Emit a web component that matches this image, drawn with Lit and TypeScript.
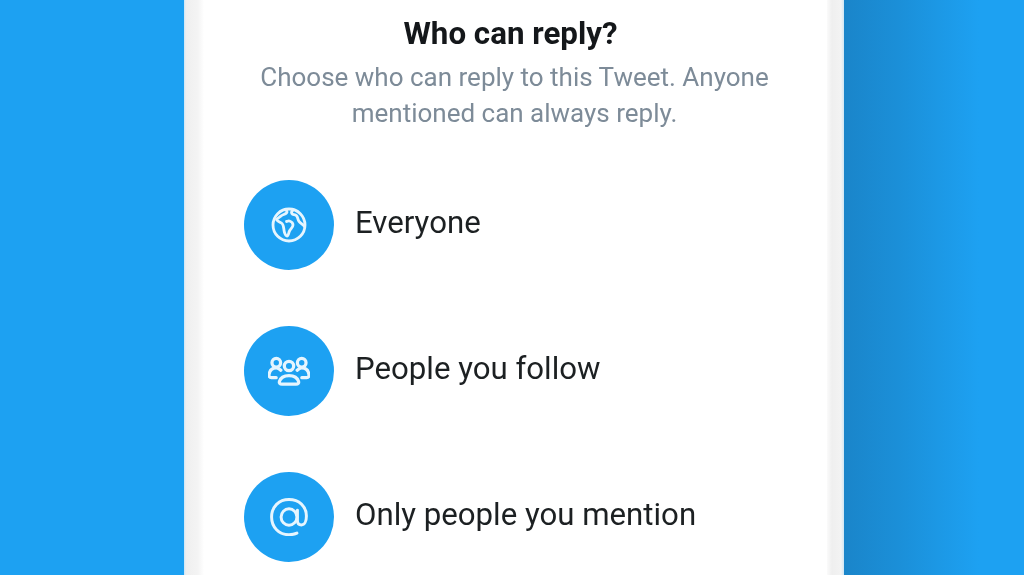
import { LitElement, css, html, svg } from "lit";
import { customElement } from "lit/decorators.js";

const globeIcon = svg`
  <circle cx="18" cy="18" r="16" />
  <path d="M14 2.500c2 1 2.500 2.500 1.500 3.500-1.500 1.500-4 1.500-5.500 3-1.500 1.500-3.500 2-4.500 3.500 1.500 2.500 3.500 2.500 5.500 4 2 1.500 1.500 6 2.500 9 .5 1.500 1 3.500 2.500 3.500 1.500 0 1.500-3 2.500-5 1-2 3.500-3.500 3.500-6 0-2-2-3.500-3.500-4-1.500-.5-2 .5-3 .5" />
  <path d="M22.500 2.800c-1.500 1-2.500 2.500-1.500 4 .8 1.200 3 .5 4.500 2 1.500 1.500 1 3.500 2.500 5.500 1.500 2 4 3 5.500 5" />
`;

const peopleIcon = svg`
  <circle cx="18" cy="13.700" r="4" />
  <path d="M12 29.200c-1.800 0-2.600-.8-2.200-2.300.9-3 4-5 8.200-5s7.300 2 8.200 5c.4 1.500-.4 2.300-2.200 2.300z" />
  <circle cx="7.100" cy="10.900" r="3.700" />
  <path d="M11 17.300c-1.100-1-2.400-1.900-3.900-1.900-3 0-5.500 2-6.200 5.300-.3 1.800.3 3 2 3h4.100" />
  <circle cx="28.900" cy="10.900" r="3.700" />
  <path d="M25 17.300c1.100-1 2.400-1.900 3.900-1.900 3 0 5.500 2 6.200 5.300.3 1.800-.3 3-2 3h-4.100" />
`;

const atIcon = svg`
  <path d="M25.500 33.300c-2.200 1-4.700 1.500-7.500 1.500C8.500 34.800 1.500 27.800 1.500 18S8.500 1.500 18 1.500 34.500 8 34.500 17c0 5-1.800 8.500-4.700 8.500-2.300 0-3.800-1.500-3.800-4V11.500" />
  <ellipse cx="18" cy="18" rx="7.500" ry="7.800" />
`;

@customElement("app-root")
export class AppRoot extends LitElement {
  static styles = css`
    :host {
      display: grid;
      grid-template-columns: 184px 660px 1fr;
      width: 1024px;
      height: 575px;
      overflow: hidden;
      background: #1da1f2;
      font-family: Roboto, "Liberation Sans", sans-serif;
    }

    .backdrop-right {
      background: linear-gradient(90deg, #1a85ca 0%, #1b8fd8 30%, #1da1f2 75%);
    }

    .phone {
      display: flex;
      padding: 0 17px 0 20px;
      background: linear-gradient(
        90deg,
        #c9e6f8 0,
        #efefef 2px,
        #f4f4f4 14px,
        #ffffff 20px,
        #ffffff 641px,
        #efefef 648px,
        #f3f3f3 657px,
        #cfe6f5 660px
      );
    }

    .sheet {
      flex: 1;
      background: #fff;
      padding-top: 15px;
      filter: blur(0.4px);
    }

    h1 {
      margin: 0;
      padding-right: 10px;
      text-align: center;
      font-size: 31.300px;
      line-height: 38px;
      font-weight: 700;
      color: #14171a;
    }

    .hint {
      margin: 6px 0 0;
      padding-right: 2px;
      text-align: center;
      font-size: 26px;
      line-height: 36px;
      color: #7d8b98;
    }

    .options {
      display: flex;
      flex-direction: column;
      gap: 56px;
      margin-top: 49px;
      padding-left: 40px;
    }

    .option {
      display: flex;
      align-items: center;
      gap: 21px;
      font-size: 31.200px;
      color: #1c2022;
    }

    .badge {
      display: flex;
      align-items: center;
      justify-content: center;
      width: 90px;
      height: 90px;
      border-radius: 50%;
      background: #1da1f2;
    }

    .badge svg {
      fill: none;
      stroke: #e6f5fe;
      stroke-width: 2.800;
      stroke-linecap: round;
      stroke-linejoin: round;
    }

    .globe svg {
      width: 36px;
      height: 36px;
    }

    .people svg {
      width: 42px;
      height: 42px;
    }

    .at svg {
      width: 38px;
      height: 38px;
    }

    .option span {
      margin-top: -6px;
    }
  `;

  private renderOption(kind: string, icon: unknown, label: string) {
    return html`
      <div class="option">
        <div class="badge ${kind}"><svg viewBox="0 0 36 36">${icon}</svg></div>
        <span>${label}</span>
      </div>
    `;
  }

  protected render() {
    return html`
      <div></div>
      <div class="phone">
        <div class="sheet">
          <h1>Who can reply?</h1>
          <p class="hint">
            Choose who can reply to this Tweet. Anyone<br />
            mentioned can always reply.
          </p>
          <div class="options">
            ${this.renderOption("globe", globeIcon, "Everyone")}
            ${this.renderOption("people", peopleIcon, "People you follow")}
            ${this.renderOption("at", atIcon, "Only people you mention")}
          </div>
        </div>
      </div>
      <div class="backdrop-right"></div>
    `;
  }
}
